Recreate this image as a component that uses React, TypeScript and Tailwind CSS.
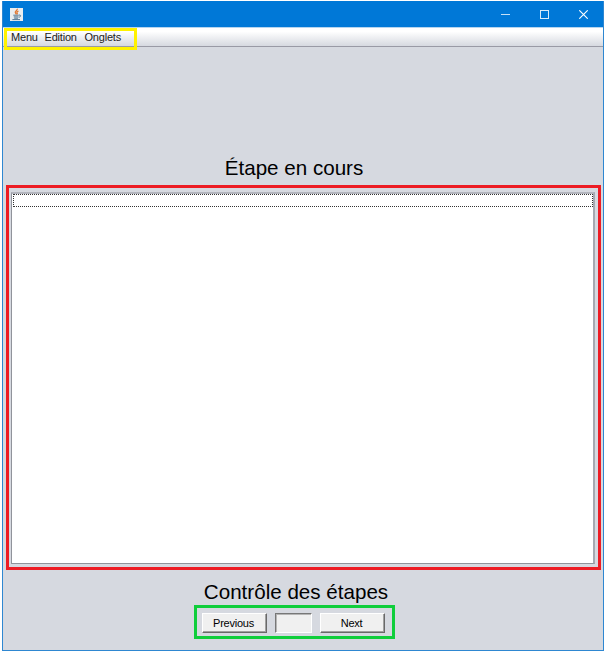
import React from "react";

function JavaIcon() {
  return (
    <svg width="13" height="13" viewBox="0 0 13 13" className="shrink-0">
      <rect width="13" height="13" fill="#e9edf0" />
      <path d="M7.3 0.8C7.8 2.4 4.6 3.1 5.3 4.6C5.6 5.3 6.2 5.6 5.9 6.4M8.5 3C6.9 3.7 6.6 4.3 7.2 5.1C7.5 5.6 7.3 6 6.9 6.4" fill="none" stroke="#e07a35" strokeWidth="1.3" />
      <path d="M3.3 7.2H8.8M3.8 8.9H8.5M4.2 10.2H8M2.4 11.6H10" fill="none" stroke="#557792" strokeWidth="1" />
      <path d="M9 7.1C11.3 6.6 11.2 8.8 8.8 9.3" fill="none" stroke="#557792" strokeWidth="1" />
    </svg>
  );
}

function TitleBar() {
  return (
    <header className="flex h-[26px] shrink-0 items-center justify-between bg-[#0078d7] pl-[7px] pr-[15px]">
      <JavaIcon />
      <div className="flex items-center gap-[30px] text-white">
        <svg width="9" height="9" viewBox="0 0 9 9" shapeRendering="crispEdges">
          <path d="M0 4.5H9" stroke="#c5e0f6" />
        </svg>
        <svg width="9" height="9" viewBox="0 0 9 9" shapeRendering="crispEdges">
          <rect x="0.5" y="0.5" width="8" height="8" fill="none" stroke="#d9ebf9" />
        </svg>
        <svg width="9" height="9" viewBox="0 0 9 9">
          <path d="M0.3 0.3L8.7 8.7M8.7 0.3L0.3 8.7" stroke="white" strokeWidth="1.1" />
        </svg>
      </div>
    </header>
  );
}

function MenuBar() {
  return (
    <nav className="relative flex h-5 shrink-0 border-t border-b border-t-[#b5d5f0] border-b-[#999aa5] bg-linear-to-b from-white from-20% to-[#d6d9e0] pl-2 text-[11px] leading-[19px] tracking-[-0.2px] text-[#222]">
      <span className="w-[33.5px]">Menu</span>
      <span className="w-10">Edition</span>
      <span>Onglets</span>
      <div className="absolute top-0 left-[1px] h-[22px] w-[133px] border-3 border-[#fff200]" />
    </nav>
  );
}

function StepButton({ children }: { children: string }) {
  return (
    <button className="h-5 w-[65px] border border-t-white border-l-white border-r-[#696969] border-b-[#696969] bg-[#f0f0f0] text-[11px] leading-[18px] tracking-[-0.25px] text-black shadow-[inset_-1px_-1px_#a0a0a0]">
      <span className="mr-[2px]">{children}</span>
    </button>
  );
}

export default function App() {
  return (
    <div className="h-[653px] w-[606px] bg-white pt-px pl-[2px] font-['Liberation_Sans',Arial,sans-serif]">
      <div className="flex h-[650px] w-[602px] flex-col border border-t-0 border-[#2e87d1] bg-[#d6d9e0]">
        <TitleBar />
        <MenuBar />
        <h1 className="mt-[108px] h-[30px] shrink-0 pr-[18px] text-center text-[20.6px] leading-[26px] text-black">
          Étape en cours
        </h1>
        <section className="ml-[3px] h-[385px] w-[595px] shrink-0 border-3 border-[#ed1c24] pt-1 pl-[2px]">
          <div className="h-[372px] w-[584px] border border-t-2 border-r-2 border-t-[#b3b5bd] border-r-[#a6a8b0] border-b-[#90939b] border-l-[#90939b] bg-white pl-px">
            <div className="h-[13px] w-[580px] border border-dotted border-[#333]" />
          </div>
        </section>
        <h2 className="mt-[9px] h-[26px] shrink-0 pr-[14px] text-center text-[20.6px] leading-[26px] text-black">
          Contrôle des étapes
        </h2>
        <section className="ml-[191px] flex h-[34px] w-[201px] shrink-0 border-3 border-[#0fce3b] pt-[5px] pl-[5px]">
          <StepButton>Previous</StepButton>
          <div className="mr-2 ml-2 h-5 w-[37px] border border-t-[#777] border-l-[#777] border-r-white border-b-white bg-[#f0f0f0] shadow-[inset_1px_1px_#b5b5b5]" />
          <StepButton>Next</StepButton>
        </section>
      </div>
    </div>
  );
}
